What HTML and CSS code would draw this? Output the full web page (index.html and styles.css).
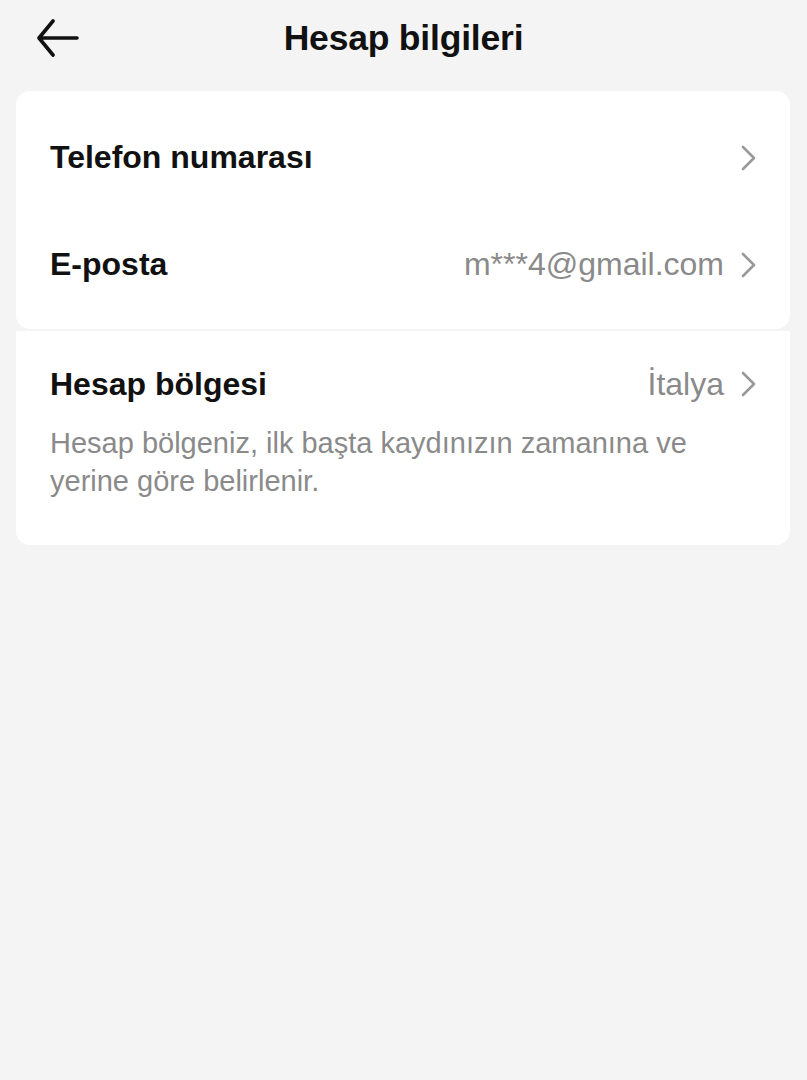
FILE: index.html
```html
<!DOCTYPE html>
<html lang="tr">
<head>
    <meta charset="UTF-8">
    <meta name="viewport" content="width=device-width, initial-scale=1.0">
    <title>Hesap bilgileri</title>
    <link rel="stylesheet" href="styles.css">
</head>
<body>
    <!-- Top bar -->
    <header class="topbar">
        <button class="back" aria-label="Geri">
            <svg width="44" height="38" viewBox="0 0 44 38">
                <path d="M3 19 H41 M17 2 L3 19 L17 36" fill="none" stroke="#111" stroke-width="3.6" stroke-linecap="round" stroke-linejoin="round"/>
            </svg>
        </button>
        <h1>Hesap bilgileri</h1>
        <span></span>
    </header>

    <!-- Contact info -->
    <section class="card card-contact">
        <div class="row">
            <span class="label">Telefon numarası</span>
            <svg class="chevron" width="16" height="26" viewBox="0 0 16 26">
                <path d="M2 2 L13 13 L2 24" fill="none" stroke="#999" stroke-width="2.6" stroke-linecap="round" stroke-linejoin="round"/>
            </svg>
        </div>
        <div class="row">
            <span class="label">E-posta</span>
            <span class="value">m***4@gmail.com</span>
            <svg class="chevron" width="16" height="26" viewBox="0 0 16 26">
                <path d="M2 2 L13 13 L2 24" fill="none" stroke="#999" stroke-width="2.6" stroke-linecap="round" stroke-linejoin="round"/>
            </svg>
        </div>
    </section>

    <!-- Region -->
    <section class="card card-region">
        <div class="row row-region">
            <span class="label">Hesap bölgesi</span>
            <span class="value">İtalya</span>
            <svg class="chevron" width="16" height="26" viewBox="0 0 16 26">
                <path d="M2 2 L13 13 L2 24" fill="none" stroke="#999" stroke-width="2.6" stroke-linecap="round" stroke-linejoin="round"/>
            </svg>
        </div>
        <p class="note">Hesap bölgeniz, ilk başta kaydınızın zamanına ve yerine göre belirlenir.</p>
    </section>
</body>
</html>
```

FILE: styles.css
```css
/* Page */
body {
    margin: 0;
    background-color: #f4f4f4;
    font-family: "Liberation Sans", Arial, sans-serif;
    color: #111;
}

/* Top bar */
.topbar {
    display: grid;
    grid-template-columns: 1fr auto 1fr;
    align-items: center;
    height: 76px;
    margin-bottom: 15px;
}

.back {
    justify-self: start;
    margin-left: 36px;
    padding: 0;
    border: none;
    background: none;
    display: flex;
}

.topbar h1 {
    margin: 0;
    font-size: 35.5px;
    font-weight: 700;
    letter-spacing: -0.2px;
}

/* Cards */
.card {
    background-color: #fff;
    margin: 0 17px 0 16px;
}

.card-contact {
    border-radius: 14px;
    padding: 13px 0 11px;
    margin-bottom: 2px;
}

.card-region {
    border-radius: 0 0 14px 14px;
    padding: 33px 33px 45px 34px;
}

.row {
    display: flex;
    align-items: center;
    height: 107px;
    padding: 0 33px 0 34px;
}

.card-region .row-region {
    height: 40px;
    padding: 0;
}

.label {
    flex: 1;
    font-size: 32px;
    font-weight: 700;
}

.value {
    font-size: 32px;
    color: #8a8a8a;
}

.chevron {
    margin-left: 17px;
}

.note {
    margin: 20px 0 0;
    font-size: 29px;
    line-height: 38px;
    color: #8a8a8a;
}
```
